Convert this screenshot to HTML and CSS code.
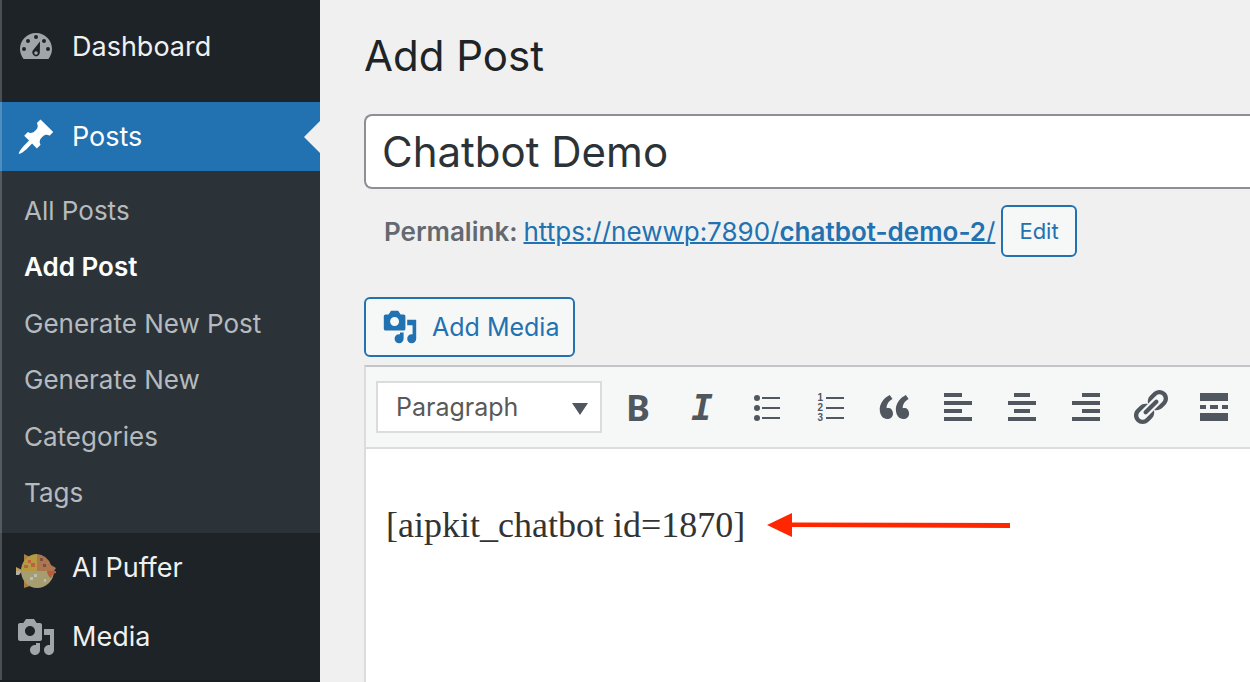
FILE: index.html
```html
<!DOCTYPE html>
<html lang="en">
<head>
<meta charset="utf-8">
<title>Add Post</title>
<link rel="stylesheet" href="styles.css">
</head>
<body>
<div class="layout">
  <nav class="sidebar" aria-label="Main menu">
    <a class="menu-item menu-item-first" href="#">
      <svg class="icon" viewBox="0 1 20 20" aria-hidden="true"><path fill="currentColor" fill-rule="evenodd" d="M3.8 17h12.4C17.3 15.600 18 13.900 18 12c0-4.420-3.580-8-8-8s-8 3.580-8 8c0 1.900.7 3.600 1.800 5zM10 5a1 1 0 1 1 0 2 1 1 0 0 1 0-2zM6 7a1 1 0 1 1 0 2 1 1 0 0 1 0-2zM14 7a1 1 0 1 1 0 2 1 1 0 0 1 0-2zM4 11a1 1 0 1 1 0 2 1 1 0 0 1 0-2zM16 11a1 1 0 1 1 0 2 1 1 0 0 1 0-2zM12 8.200l-.1 5.800a1.900 1.900 0 1 1-3.500-1.300z"/><circle cx="10" cy="14" r=".9" fill="currentColor"/></svg>
      <span>Dashboard</span>
    </a>
    <a class="menu-item menu-item-current" href="#">
      <svg class="icon" viewBox="0 0 20 20" aria-hidden="true"><path fill="currentColor" d="M10.440 3.020l1.820-1.820 6.360 6.350-1.830 1.820c-1.050-.68-2.480-.57-3.410.36l-.75.75c-.92.93-1.040 2.350-.35 3.410l-1.830 1.820-2.410-2.410-2.800 2.790c-.42.42-3.380 2.710-3.800 2.290s1.860-3.390 2.280-3.810l2.790-2.790L4.100 9.360l1.830-1.820c1.050.69 2.480.57 3.400-.36l.75-.75c.93-.92 1.050-2.350.36-3.410z"/></svg>
      <span>Posts</span>
    </a>
    <ul class="submenu">
      <li><a href="#">All Posts</a></li>
      <li><a class="current" href="#">Add Post</a></li>
      <li><a href="#">Generate New Post</a></li>
      <li><a href="#">Generate New</a></li>
      <li><a href="#">Categories</a></li>
      <li><a href="#">Tags</a></li>
    </ul>
    <a class="menu-item" href="#">
      <svg class="icon" viewBox="0 -3 40 40" aria-hidden="true">
        <path fill="#ad7e43" d="M8 3l6 3-6 5zM8 37l6-2-6-6z"/><path fill="#bd9f58" d="M0 16l6 3v2H0z"/><path fill="#b0b0a8" d="M0 20h6l-3 4H0z"/>
        <path fill="#b39a43" d="M21 3v17H5A16 17 0 0 1 21 3z"/><path fill="#ae7650" d="M21 3a16 17 0 0 1 14 11l5 3-2 3H21z"/>
        <path fill="#a69e70" d="M5 20h33A17 17 0 0 1 21 37 16 17 0 0 1 5 20z"/><path fill="#b75c3c" d="M31 20h9v2l-3 1-2 4c-2-1-4-4-4-7z"/>
        <path fill="#bd623c" d="M12 9h3v3h-3zM8 14h4v3H8zM15 12h4v4h-4z"/><path fill="#795342" d="M24 7h3v3h-3zM27 13h3v3h-3z"/><path fill="#bebdb4" d="M18 23h3v3h-3zM14 26h3v3h-3zM28 28h2v3h-2z"/>
      </svg>
      <span>AI Puffer</span>
    </a>
    <a class="menu-item" href="#">
      <svg class="icon" viewBox="0 0 20 20" aria-hidden="true"><path fill="currentColor" d="M13 11V4c0-.55-.45-1-1-1h-1.670L9 1H5L3.670 3H2c-.55 0-1 .45-1 1v7c0 .55.45 1 1 1h10c.55 0 1-.45 1-1zM7 4.500c1.380 0 2.500 1.120 2.500 2.500S8.380 9.500 7 9.500 4.500 8.380 4.500 7 5.620 4.500 7 4.500zM14 6h5v10.500c0 1.380-1.120 2.500-2.500 2.500S14 17.880 14 16.500s1.120-2.500 2.500-2.500c.17 0 .34.02.5.05V9h-3V6zm-4 8.050V13h2v3.500c0 1.380-1.120 2.500-2.500 2.500S7 17.880 7 16.500 8.120 14 9.500 14c.17 0 .34.02.5.05z"/></svg>
      <span>Media</span>
    </a>
  </nav>

  <main class="content">
    <h1>Add Post</h1>
    <input class="title-input" type="text" aria-label="Post title" value="Chatbot Demo">
    <div class="permalink">
      <strong>Permalink:</strong>
      <a href="#">https://newwp:7890/<b>chatbot-demo-2</b>/</a>
      <button class="button button-small" type="button">Edit</button>
    </div>
    <button class="button button-media" type="button">
      <svg viewBox="0 0 20 20" aria-hidden="true"><path fill="currentColor" d="M13 11V4c0-.55-.45-1-1-1h-1.670L9 1H5L3.670 3H2c-.55 0-1 .45-1 1v7c0 .55.45 1 1 1h10c.55 0 1-.45 1-1zM7 4.500c1.380 0 2.500 1.120 2.500 2.500S8.380 9.500 7 9.500 4.500 8.380 4.500 7 5.620 4.500 7 4.500zM14 6h5v10.500c0 1.380-1.120 2.500-2.500 2.500S14 17.880 14 16.500s1.120-2.500 2.500-2.500c.17 0 .34.02.5.05V9h-3V6zm-4 8.050V13h2v3.500c0 1.380-1.120 2.500-2.500 2.500S7 17.880 7 16.500 8.120 14 9.500 14c.17 0 .34.02.5.05z"/></svg>
      Add Media
    </button>
    <section class="editor" aria-label="Post editor">
      <div class="toolbar">
        <div class="format">
          <select aria-label="Text format"><option>Paragraph</option></select>
          <svg class="caret" viewBox="0 0 16 12" aria-hidden="true"><path fill="currentColor" d="M0 0h16L8 12z"/></svg>
        </div>
        <button class="tool tool-bold" type="button" aria-label="Bold">B</button>
        <button class="tool tool-italic" type="button" aria-label="Italic">I</button>
        <button class="tool" type="button" aria-label="Bulleted list"><svg viewBox="0 0 20 20"><path d="M8 5h9v1H8zM8 10h9v1H8zM8 15h9v1H8z"/><circle cx="5.500" cy="5.500" r="1.500"/><circle cx="5.500" cy="10.500" r="1.500"/><circle cx="5.500" cy="15.500" r="1.500"/></svg></button>
        <button class="tool" type="button" aria-label="Numbered list"><svg viewBox="0 0 20 20"><path d="M8 5h9v1H8zM8 10h9v1H8zM8 15h9v1H8z"/><g class="digits"><text x="3.700" y="7">1</text><text x="3.700" y="12">2</text><text x="3.700" y="17">3</text></g></svg></button>
        <button class="tool" type="button" aria-label="Blockquote"><svg viewBox="0 0 20 20"><path d="M9.490 13.220c0-.74-.2-1.380-.61-1.900-.62-.78-1.830-.88-2.530-.72-.29-1.650 1.110-3.750 2.920-4.650L7.880 4c-2.730 1.300-5.420 4.280-4.960 8.050C3.210 14.430 4.590 16 6.540 16c.85 0 1.560-.25 2.120-.75s.83-1.180.83-2.030zm8.050 0c0-.74-.2-1.380-.61-1.900-.63-.78-1.830-.88-2.530-.72-.29-1.650 1.110-3.750 2.920-4.650L15.930 4c-2.730 1.300-5.410 4.280-4.950 8.050.29 2.380 1.660 3.950 3.610 3.950.85 0 1.560-.25 2.120-.75s.83-1.180.83-2.030z"/></svg></button>
        <button class="tool" type="button" aria-label="Align left"><svg viewBox="0 0 20 20"><path d="M3 3h9v2H3zM3 7h14v2H3zM3 11h9v2H3zM3 15h14v2H3z"/></svg></button>
        <button class="tool" type="button" aria-label="Align center"><svg viewBox="0 0 20 20"><path d="M6 3h8v2H6zM3 7h14v2H3zM6 11h8v2H6zM3 15h14v2H3z"/></svg></button>
        <button class="tool" type="button" aria-label="Align right"><svg viewBox="0 0 20 20"><path d="M8 3h9v2H8zM3 7h14v2H3zM8 11h9v2H8zM3 15h14v2H3z"/></svg></button>
        <button class="tool" type="button" aria-label="Insert link"><svg viewBox="0 0 20 20"><path d="M17.740 2.760c1.680 1.690 1.680 4.410 0 6.100l-1.530 1.520c-1.120 1.120-2.700 1.470-4.140 1.090l2.620-2.610.76-.77.76-.76c.84-.84.84-2.200 0-3.040-.84-.85-2.200-.85-3.040 0l-.77.76-3.380 3.380c-.37-1.440-.02-3.020 1.100-4.140l1.520-1.530c1.690-1.680 4.420-1.680 6.100 0zM8.590 13.430l5.340-5.340c.42-.42.42-1.100 0-1.520-.44-.43-1.130-.39-1.530 0l-5.330 5.340c-.42.42-.42 1.100 0 1.520.44.43 1.130.39 1.520 0zm-.76 2.290l4.140-4.150c.38 1.440.03 3.020-1.090 4.140l-1.520 1.530c-1.690 1.680-4.410 1.680-6.100 0-1.680-1.680-1.680-4.420 0-6.100l1.530-1.520c1.120-1.120 2.700-1.470 4.140-1.100l-4.140 4.150c-.85.84-.85 2.200 0 3.050.84.84 2.200.84 3.040 0z"/></svg></button>
        <button class="tool" type="button" aria-label="Insert Read More tag"><svg viewBox="0 0 20 20"><path d="M3 3h14v4H3zM3 9h3v2H3zM8 9h4v2H8zM14 9h3v2h-3zM3 13h14v4H3z"/></svg></button>
      </div>
      <div class="document">
        <p>[aipkit_chatbot id=1870]</p>
        <svg class="arrow" viewBox="0 0 244 26" aria-hidden="true"><path fill="#ff2600" d="M0 13L25 1v9.500L243 11v5L25 15v10z"/></svg>
      </div>
    </section>
  </main>
</div>
</body>
</html>
```
FILE: styles.css
```css
* {
  box-sizing: border-box;
}

body {
  margin: 0;
  background: #f0f0f0;
  color: #3c434a;
  font-family: Inter, "Liberation Sans", sans-serif;
  font-size: 26px;
}

button,
input,
select {
  font-family: inherit;
}

.layout {
  display: flex;
  min-height: 100vh;
  overflow: hidden;
}

/* Sidebar */
.sidebar {
  position: relative;
  flex: 0 0 320px;
  padding-top: 12px;
  border-bottom: 2px solid #191e23;
  background: #1d2327;
}

.sidebar::before {
  content: "";
  position: absolute;
  z-index: 1;
  inset: 0 auto 0 0;
  width: 2px;
  background: rgba(255, 255, 255, 0.2);
}

.menu-item {
  display: flex;
  align-items: center;
  gap: 16px;
  height: 69px;
  padding-left: 16px;
  color: #f0f0f1;
  font-size: 27px;
  text-decoration: none;
}

.menu-item-first {
  margin-bottom: 21px;
}

.icon {
  width: 40px;
  height: 40px;
  color: #a0a5aa;
}

.menu-item-current {
  position: relative;
  background: #2271b1;
  color: #fff;
}

.menu-item-current .icon {
  color: #fff;
}

.menu-item-current::after {
  content: "";
  position: absolute;
  top: 19px;
  right: 0;
  border: 16px solid transparent;
  border-left-width: 0;
  border-right-color: #f0f0f0;
}

.submenu {
  margin: 0;
  padding: 12px 0;
  background: #2c3338;
  list-style: none;
}

.submenu a {
  display: block;
  padding: 10px 24px;
  color: #b5babf;
  font-size: 26px;
  line-height: 1.4;
  text-decoration: none;
}

.submenu .current {
  color: #fff;
  font-weight: 600;
}

/* Content */
.content {
  display: flex;
  flex: 1;
  flex-direction: column;
  align-items: flex-start;
  min-width: 0;
  padding: 28px 0 0 44px;
}

h1 {
  margin: 0 0 30px;
  color: #1d2327;
  font-size: 42px;
  font-weight: 400;
  line-height: 56px;
}

.title-input {
  width: 100%;
  height: 75px;
  padding: 0 16px;
  border: 2px solid #8c8f94;
  border-right: 0;
  border-radius: 8px 0 0 8px;
  background: #fff;
  color: #2c3338;
  font-size: 42px;
}

.permalink {
  display: flex;
  align-items: center;
  gap: 6px;
  padding: 16px 20px 0;
  color: #646970;
  font-size: 26px;
  white-space: nowrap;
}

.permalink strong {
  font-weight: 600;
}

.permalink a {
  color: #2271b1;
  text-decoration-thickness: 2px;
}

.permalink b {
  font-weight: 600;
}

.button {
  border: 2px solid #2271b1;
  border-radius: 6px;
  background: #f6f7f7;
  color: #2271b1;
}

.button-small {
  height: 52px;
  padding: 0 16px;
  font-size: 22px;
}

.button-media {
  display: flex;
  align-items: center;
  gap: 14px;
  height: 60px;
  margin: 40px 0 8px;
  padding: 0 14px 0 16px;
  font-size: 25px;
}

.button-media svg {
  width: 36px;
  height: 36px;
}

/* Editor */
.editor {
  display: flex;
  flex: 1;
  flex-direction: column;
  width: 100%;
  border-top: 2px solid #c3c4c7;
  border-left: 2px solid #dcdcde;
  background: #fff;
}

.toolbar {
  display: flex;
  align-items: center;
  gap: 24px;
  height: 82px;
  padding-left: 10px;
  border-bottom: 2px solid #dcdcde;
  background: #f6f7f7;
  color: #50575e;
}

.format {
  position: relative;
  flex: 0 0 226px;
  margin-right: -8px;
}

.format select {
  width: 100%;
  height: 52px;
  padding: 0 18px;
  appearance: none;
  border: 2px solid #dcdcde;
  border-radius: 0;
  background: #fff;
  color: #595959;
  font-size: 25px;
}

.caret {
  position: absolute;
  top: 22px;
  right: 14px;
  width: 16px;
  height: 12px;
  pointer-events: none;
}

.tool {
  flex: 0 0 40px;
  height: 40px;
  padding: 0;
  border: 0;
  background: none;
  color: inherit;
  line-height: 42px;
}

.tool svg {
  display: block;
  width: 40px;
  height: 40px;
  fill: currentColor;
}

.tool-bold {
  font-family: "Noto Sans", sans-serif;
  font-size: 36px;
  font-weight: 700;
}

.tool-italic {
  font-family: "DejaVu Sans Mono", monospace;
  font-size: 36px;
  font-style: italic;
  font-weight: 700;
}

.digits {
  font-family: "Liberation Sans", sans-serif;
  font-size: 5px;
  font-weight: 700;
}

.document {
  display: flex;
  align-items: center;
  gap: 22px;
  padding: 54px 20px;
  color: #333;
}

.document p {
  margin: 0;
  font-family: Georgia, "Liberation Serif", serif;
  font-size: 36px;
  line-height: 44px;
  white-space: nowrap;
}

.arrow {
  flex: 0 0 244px;
  height: 26px;
}
```
